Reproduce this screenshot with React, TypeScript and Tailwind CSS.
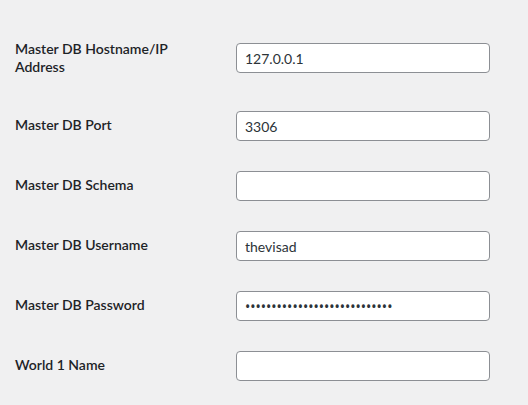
const fields: { label: string; value: string; type?: string }[] = [
  { label: 'Master DB Hostname/IP Address', value: '127.0.0.1' },
  { label: 'Master DB Port', value: '3306' },
  { label: 'Master DB Schema', value: '' },
  { label: 'Master DB Username', value: 'thevisad' },
  { label: 'Master DB Password', value: 'abcdefghijklmnopqrstuvwxyzab', type: 'password' },
  { label: 'World 1 Name', value: '' },
];

const font = { fontFamily: 'Lato, "Segoe UI", sans-serif' };
// password bullets are smaller in Noto Sans, closer to the original
const dotFont = { fontFamily: '"Noto Sans", sans-serif' };

export default function App() {
  return (
    <main
      className="min-h-screen bg-[#f0f0f1] text-[#1d2327] pt-5 pl-[15px] text-[14px] leading-[1.3]"
      style={font}
    >
      {fields.map((f) => (
        <div key={f.label} className="flex items-center">
          <div className="w-[210px] shrink-0 self-start py-5 pr-[10px] font-semibold">
            {f.label}
          </div>
          <div className="pl-[11px] pr-[10px] py-[15px]">
            <input
              type={f.type || 'text'}
              defaultValue={f.value}
              className="block w-[254px] h-[30px] px-2 bg-white border border-[#8c8f94] rounded-[4px] text-[14px] text-[#2c3338] outline-none"
              style={f.type === 'password' ? dotFont : font}
            />
          </div>
        </div>
      ))}
    </main>
  );
}
